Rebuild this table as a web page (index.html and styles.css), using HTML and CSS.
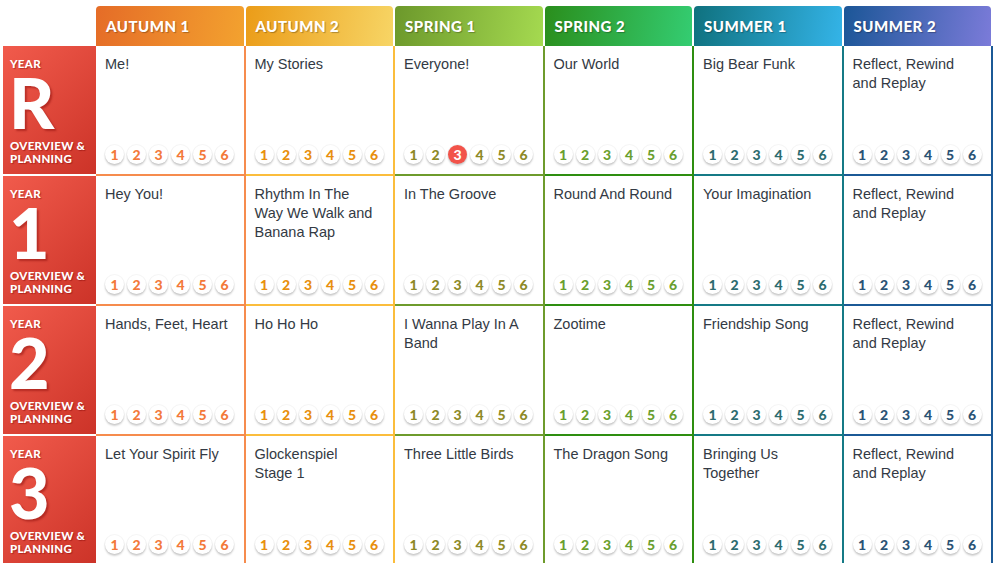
FILE: index.html
```html
<!DOCTYPE html>
<html>
<head>
<meta charset="utf-8">
<link rel="stylesheet" href="styles.css">
</head>
<body>
<div class="plan">
  <div class="corner"></div>
  <div class="head a1">Autumn 1</div>
  <div class="head a2">Autumn 2</div>
  <div class="head s1">Spring 1</div>
  <div class="head s2">Spring 2</div>
  <div class="head u1">Summer 1</div>
  <div class="head u2">Summer 2</div>

  <div class="year"><div class="y-top">Year</div><div class="y-big">R</div><div class="y-bot">Overview &amp;<br>Planning</div></div>
  <div class="cell a1"><div class="title">Me!</div><div class="nums"><span>1</span><span>2</span><span>3</span><span>4</span><span>5</span><span>6</span></div></div>
  <div class="cell a2"><div class="title">My Stories</div><div class="nums"><span>1</span><span>2</span><span>3</span><span>4</span><span>5</span><span>6</span></div></div>
  <div class="cell s1"><div class="title">Everyone!</div><div class="nums"><span>1</span><span>2</span><span class="on">3</span><span>4</span><span>5</span><span>6</span></div></div>
  <div class="cell s2"><div class="title">Our World</div><div class="nums"><span>1</span><span>2</span><span>3</span><span>4</span><span>5</span><span>6</span></div></div>
  <div class="cell u1"><div class="title">Big Bear Funk</div><div class="nums"><span>1</span><span>2</span><span>3</span><span>4</span><span>5</span><span>6</span></div></div>
  <div class="cell u2"><div class="title">Reflect, Rewind and Replay</div><div class="nums"><span>1</span><span>2</span><span>3</span><span>4</span><span>5</span><span>6</span></div></div>

  <div class="year"><div class="y-top">Year</div><div class="y-big">1</div><div class="y-bot">Overview &amp;<br>Planning</div></div>
  <div class="cell a1"><div class="title">Hey You!</div><div class="nums"><span>1</span><span>2</span><span>3</span><span>4</span><span>5</span><span>6</span></div></div>
  <div class="cell a2"><div class="title">Rhythm In The Way We Walk and Banana Rap</div><div class="nums"><span>1</span><span>2</span><span>3</span><span>4</span><span>5</span><span>6</span></div></div>
  <div class="cell s1"><div class="title">In The Groove</div><div class="nums"><span>1</span><span>2</span><span>3</span><span>4</span><span>5</span><span>6</span></div></div>
  <div class="cell s2"><div class="title">Round And Round</div><div class="nums"><span>1</span><span>2</span><span>3</span><span>4</span><span>5</span><span>6</span></div></div>
  <div class="cell u1"><div class="title">Your Imagination</div><div class="nums"><span>1</span><span>2</span><span>3</span><span>4</span><span>5</span><span>6</span></div></div>
  <div class="cell u2"><div class="title">Reflect, Rewind and Replay</div><div class="nums"><span>1</span><span>2</span><span>3</span><span>4</span><span>5</span><span>6</span></div></div>

  <div class="year"><div class="y-top">Year</div><div class="y-big">2</div><div class="y-bot">Overview &amp;<br>Planning</div></div>
  <div class="cell a1"><div class="title">Hands, Feet, Heart</div><div class="nums"><span>1</span><span>2</span><span>3</span><span>4</span><span>5</span><span>6</span></div></div>
  <div class="cell a2"><div class="title">Ho Ho Ho</div><div class="nums"><span>1</span><span>2</span><span>3</span><span>4</span><span>5</span><span>6</span></div></div>
  <div class="cell s1"><div class="title">I Wanna Play In A Band</div><div class="nums"><span>1</span><span>2</span><span>3</span><span>4</span><span>5</span><span>6</span></div></div>
  <div class="cell s2"><div class="title">Zootime</div><div class="nums"><span>1</span><span>2</span><span>3</span><span>4</span><span>5</span><span>6</span></div></div>
  <div class="cell u1"><div class="title">Friendship Song</div><div class="nums"><span>1</span><span>2</span><span>3</span><span>4</span><span>5</span><span>6</span></div></div>
  <div class="cell u2"><div class="title">Reflect, Rewind and Replay</div><div class="nums"><span>1</span><span>2</span><span>3</span><span>4</span><span>5</span><span>6</span></div></div>

  <div class="year"><div class="y-top">Year</div><div class="y-big">3</div><div class="y-bot">Overview &amp;<br>Planning</div></div>
  <div class="cell a1"><div class="title">Let Your Spirit Fly</div><div class="nums"><span>1</span><span>2</span><span>3</span><span>4</span><span>5</span><span>6</span></div></div>
  <div class="cell a2"><div class="title">Glockenspiel Stage&nbsp;1</div><div class="nums"><span>1</span><span>2</span><span>3</span><span>4</span><span>5</span><span>6</span></div></div>
  <div class="cell s1"><div class="title">Three Little Birds</div><div class="nums"><span>1</span><span>2</span><span>3</span><span>4</span><span>5</span><span>6</span></div></div>
  <div class="cell s2"><div class="title">The Dragon Song</div><div class="nums"><span>1</span><span>2</span><span>3</span><span>4</span><span>5</span><span>6</span></div></div>
  <div class="cell u1"><div class="title">Bringing Us Together</div><div class="nums"><span>1</span><span>2</span><span>3</span><span>4</span><span>5</span><span>6</span></div></div>
  <div class="cell u2"><div class="title">Reflect, Rewind and Replay</div><div class="nums"><span>1</span><span>2</span><span>3</span><span>4</span><span>5</span><span>6</span></div></div>
</div>
</body>
</html>
```

FILE: styles.css
```css
html, body {
  margin: 0;
  padding: 0;
  background: #ffffff;
  overflow: hidden;
}
body {
  font-family: "Liberation Sans", Arial, sans-serif;
  color: #333a44;
}
.plan {
  display: grid;
  grid-template-columns: 93px repeat(6, 1fr);
  grid-template-rows: 40px repeat(4, 130px);
  width: 990px;
  margin: 6px 0 0 3px;
}
.head {
  margin-right: 2px;
  border-radius: 4px 4px 0 0;
  color: #fff;
  font-family: Lato, "Liberation Sans", sans-serif;
  font-weight: 900;
  font-size: 15px;
  letter-spacing: 0.5px;
  text-transform: uppercase;
  display: flex;
  align-items: center;
  padding: 0 0 1px 10px;
  text-shadow: 1px 1px 1px rgba(0,0,0,0.28);
}
.head.a1 { background: linear-gradient(100deg, #e56c27, #f3a22f); }
.head.a2 { background: linear-gradient(100deg, #eb9c18, #f7d565); }
.head.s1 { background: linear-gradient(100deg, #6c982b, #a5da50); }
.head.s2 { background: linear-gradient(100deg, #2a8e1c, #34cd72); }
.head.u1 { background: linear-gradient(100deg, #0f717e, #34b4e8); }
.head.u2 { background: linear-gradient(100deg, #1b5697, #7b7bd9); }

.year {
  margin-bottom: 2px;
  background: linear-gradient(135deg, #f15b4c, #cc3328);
  color: #fff;
  display: flex;
  flex-direction: column;
  padding: 11px 0 9px 7px;
  text-transform: uppercase;
  font-family: Lato, "Liberation Sans", sans-serif;
  font-weight: 900;
  text-shadow: 1px 1px 1px rgba(120,0,0,0.45);
}
.y-top {
  font-size: 11.5px;
  line-height: 13px;
  height: 13px;
  letter-spacing: 0.3px;
}
.y-big {
  font-size: 70px;
  line-height: 56px;
  height: 56px;
  margin-top: 4px;
  margin-left: -1px;
  text-shadow: 2px 2px 2px rgba(120,0,0,0.4);
}
.y-bot {
  margin-top: auto;
  font-size: 11.5px;
  line-height: 13px;
  letter-spacing: 0.3px;
}

.cell {
  border-right: 2px solid;
  border-bottom: 2px solid;
  display: flex;
  flex-direction: column;
  justify-content: space-between;
  padding: 9px 8px 10px 9px;
  min-width: 0;
}
.title {
  font-size: 14.5px;
  line-height: 19px;
  color: #333a44;
  max-width: 125px;
}
.nums {
  display: flex;
  gap: 3px;
  font-family: Lato, "Liberation Sans", sans-serif;
}
.nums span {
  width: 19px;
  height: 19px;
  border-radius: 50%;
  background: #fff;
  box-shadow: 0 2px 2px rgba(0,0,0,0.18), 0 0 0 1px rgba(0,0,0,0.04);
  display: flex;
  align-items: center;
  justify-content: center;
  font-size: 14px;
  font-weight: 900;
}
.nums span.on {
  background: #f2534a;
  color: #fff !important;
}

.cell.a1 { border-color: #f68c4e; }
.cell.a2 { border-color: #fbbd3c; }
.cell.s1 { border-color: #6e9b2c; }
.cell.s2 { border-color: #2e8e10; }
.cell.u1 { border-color: #157a86; }
.cell.u2 { border-color: #1b5996; }
.cell.a1 .nums span { color: #f37a3b; }
.cell.a2 .nums span { color: #e8900f; }
.cell.s1 .nums span { color: #8e8a27; }
.cell.s2 .nums span { color: #6a9f2f; }
.cell.u1 .nums span { color: #2d6c6f; }
.cell.u2 .nums span { color: #2b5375; }
```
